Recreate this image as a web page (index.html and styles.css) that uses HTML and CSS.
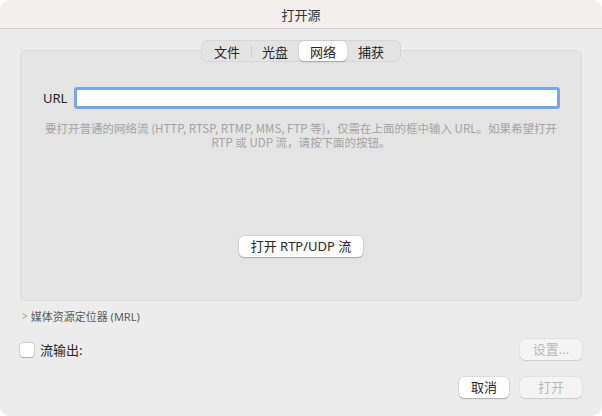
FILE: index.html
```html
<!DOCTYPE html>
<html lang="zh">
<head>
<meta charset="utf-8">
<link rel="stylesheet" href="styles.css">
</head>
<body>
<div class="window">
  <div class="titlebar">打开源</div>
  <div class="content">
    <div class="tabs">
      <div class="segmented">
        <span class="seg">文件</span>
        <span class="sep"></span>
        <span class="seg">光盘</span>
        <span class="seg active">网络</span>
        <span class="seg">捕获</span>
      </div>
      <div class="tabbox">
        <div class="url-row">
          <label class="url-label">URL</label>
          <div class="url-input"></div>
        </div>
        <p class="help">要打开普通的网络流 (HTTP, RTSP, RTMP, MMS, FTP 等)，仅需在上面的框中输入 URL。如果希望打开<br>RTP 或 UDP 流，请按下面的按钮。</p>
        <div class="rtp-row"><button class="btn">打开 RTP/UDP 流</button></div>
      </div>
    </div>
    <div class="mrl"><span class="chev">&gt;</span>媒体资源定位器 (MRL)</div>
    <div class="stream-row">
      <label class="check"><span class="box"></span>流输出:</label>
      <button class="btn disabled wide">设置...</button>
    </div>
    <div class="actions">
      <button class="btn cancel">取消</button>
      <button class="btn disabled wide">打开</button>
    </div>
  </div>
</div>
</body>
</html>
```
FILE: styles.css
```css
* { box-sizing: border-box; }
html, body { margin: 0; padding: 0; background: #ffffff; }
body {
  font-family: "Noto Sans", "Noto Sans CJK SC", sans-serif;
  color: #262626;
}
.window {
  width: 602px;
  height: 416px;
  background: #ececec;
  border-radius: 10px;
  overflow: hidden;
}
.titlebar {
  height: 29px;
  background: #f3efee;
  border-bottom: 1px solid #d3d1d0;
  display: flex;
  align-items: center;
  justify-content: center;
  font-size: 13px;
  color: #333;
}
.content {
  padding: 0 20px;
}
.tabs {
  margin-top: 11px;
  display: flex;
  flex-direction: column;
  align-items: center;
}
.segmented {
  position: relative;
  z-index: 2;
  height: 22px;
  width: 200px;
  display: flex;
  align-items: center;
  background: #e3e3e3;
  border: 1px solid #d6d6d6;
  border-radius: 6px;
  padding: 0 1px;
  font-size: 13px;
}
.seg {
  flex: 0 0 auto;
  width: 48px;
  height: 20px;
  display: flex;
  align-items: center;
  justify-content: center;
  color: #262626;
  border-radius: 5px;
}
.seg.active {
  background: #ffffff;
  box-shadow: 0 0.5px 1.5px rgba(0,0,0,0.25);
}
.sep {
  width: 1px;
  height: 12px;
  background: #cfcfcf;
  margin: 0 -0.5px;
}
.tabbox {
  margin-top: -12px;
  width: 562px;
  height: 251px;
  background: #e4e4e4;
  border: 1px solid #d9d9d9;
  border-radius: 6px;
  padding-top: 36px;
}
.url-row {
  display: flex;
  align-items: center;
  padding-left: 22px;
}
.url-label {
  font-size: 13px;
  width: 31px;
  color: #262626;
}
.url-input {
  width: 486px;
  height: 22px;
  background: #fff;
  border: 3px solid #78a6ea;
  border-radius: 3px;
}
.help {
  margin: 12px 0 0;
  text-align: center;
  font-family: "Noto Sans CJK SC", sans-serif;
  font-size: 11.5px;
  line-height: 14px;
  color: #a3a3a3;
}
.rtp-row {
  display: flex;
  justify-content: center;
  margin-top: 87px;
}
.btn {
  font-family: inherit;
  font-size: 13px;
  color: #262626;
  background: #ffffff;
  border: none;
  border-radius: 5px;
  height: 21px;
  padding: 0 10px;
  box-shadow: 0 0 0 0.5px rgba(0,0,0,0.12), 0 1px 1.5px rgba(0,0,0,0.22);
  display: flex;
  align-items: center;
  justify-content: center;
  line-height: 1;
}
.rtp-row .btn { width: 124px; }
.mrl {
  margin-top: 8px;
  font-size: 11px;
  color: #5a5a5a;
  height: 14px;
  display: flex;
  align-items: center;
  padding-left: 2px;
}
.chev {
  color: #9a9a9a;
  font-size: 10px;
  margin-right: 3px;
}
.stream-row {
  margin-top: 16px;
  display: flex;
  justify-content: space-between;
  align-items: center;
  height: 21px;
}
.check {
  display: flex;
  align-items: center;
  font-size: 13px;
  color: #262626;
}
.box {
  width: 14px;
  height: 14px;
  background: #fff;
  border-radius: 3px;
  box-shadow: 0 0 0 0.5px rgba(0,0,0,0.2), 0 0.5px 1px rgba(0,0,0,0.2);
  margin-right: 6px;
}
.btn.disabled {
  background: #f4f4f4;
  color: #b8b8b8;
  box-shadow: 0 0 0 0.5px rgba(0,0,0,0.06), 0 0.5px 1px rgba(0,0,0,0.12);
}
.btn.wide { width: 62px; }
.actions {
  margin-top: 17px;
  display: flex;
  justify-content: flex-end;
  gap: 11px;
}
.btn.cancel { width: 50px; }
```
